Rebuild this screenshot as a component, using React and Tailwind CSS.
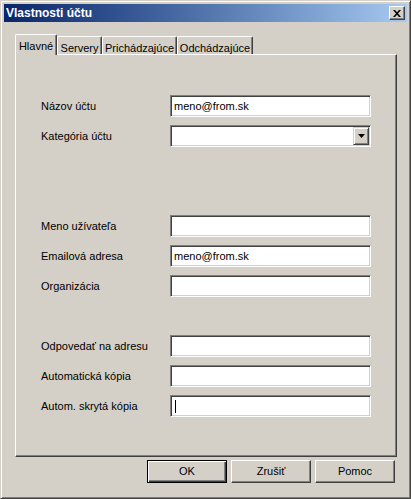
import React from 'react';

// Windows classic "account properties" dialog
const Field = ({ value, caret }) => (
  <div className="w-[201px] h-[22px] bg-white border border-t-[#808080] border-l-[#808080] border-r-white border-b-white shadow-[inset_1px_1px_0_#404040,inset_-1px_-1px_0_#D4D0C8] flex items-center pl-[3px]">
    {value && <span className="leading-none">{value}</span>}
    {caret && <span className="w-px h-[13px] bg-black ml-px" />}
  </div>
);

const Combo = () => (
  <div className="w-[201px] h-[22px] bg-white border border-t-[#808080] border-l-[#808080] border-r-white border-b-white shadow-[inset_1px_1px_0_#404040,inset_-1px_-1px_0_#D4D0C8] flex items-center justify-end p-[1px]">
    <div className="w-[16px] h-[18px] bg-[#D4D0C8] border border-t-[#D4D0C8] border-l-[#D4D0C8] border-r-[#404040] border-b-[#404040] shadow-[inset_1px_1px_0_#fff,inset_-1px_-1px_0_#808080] flex items-center justify-center">
      <svg width="7" height="4" viewBox="0 0 7 4">
        <polygon points="0,0 7,0 3.5,4" fill="#000" />
      </svg>
    </div>
  </div>
);

const Row = ({ label, children }) => (
  <div className="flex items-center">
    <div className="w-[129px]">{label}</div>
    {children}
  </div>
);

const Button = ({ children, isDefault }) => (
  <button
    type="button"
    className={
      isDefault
        ? 'w-[80px] h-[23px] bg-[#D4D0C8] border border-black shadow-[inset_1px_1px_0_#fff,inset_-1px_-1px_0_#404040,inset_-2px_-2px_0_#808080] leading-none'
        : 'w-[80px] h-[23px] bg-[#D4D0C8] border border-t-white border-l-white border-r-[#404040] border-b-[#404040] shadow-[inset_-1px_-1px_0_#808080] leading-none'
    }
  >
    {children}
  </button>
);

const tabs = [
  { name: 'Servery', w: 'w-[45px]' },
  { name: 'Prichádzajúce', w: 'w-[75px]' },
  { name: 'Odchádzajúce', w: 'w-[76px]' },
];

export default function App() {
  return (
    <div className="w-[411px] h-[499px] bg-[#D4D0C8] border border-t-[#D4D0C8] border-l-[#D4D0C8] border-r-[#404040] border-b-[#404040] shadow-[inset_1px_1px_0_#fff,inset_-1px_-1px_0_#808080] p-[3px] flex flex-col text-[11px] text-black font-['Liberation_Sans',Arial,sans-serif]">
      {/* title bar */}
      <div className="h-[18px] flex items-center justify-between bg-linear-to-r from-[#0A246A] to-[#A6CAF0] pl-[2px] pr-[2px]">
        <span className="text-white font-bold text-[12px] leading-none">Vlastnosti účtu</span>
        <div className="w-[16px] h-[14px] bg-[#D4D0C8] border border-t-white border-l-white border-r-[#404040] border-b-[#404040] shadow-[inset_-1px_-1px_0_#808080] flex items-center justify-center">
          <svg width="8" height="7" viewBox="0 0 8 7">
            <path d="M0 0h2l2 2.2L6 0h2L5 3.5 8 7H6L4 4.8 2 7H0l3-3.5z" fill="#000" />
          </svg>
        </div>
      </div>

      {/* tabs */}
      <div className="ml-[11px] mt-[12px] flex items-end h-[20px]">
        <div className="relative z-10 -mb-px w-[42px] h-[21px] bg-[#D4D0C8] border border-b-0 border-t-white border-l-white border-r-[#404040] shadow-[inset_-1px_0_0_#808080] rounded-t-[2px] flex justify-center pt-[3px]">
          Hlavné
        </div>
        {tabs.map((t) => (
          <div
            key={t.name}
            className={`${t.w} h-[18px] border border-b-0 border-t-white border-l-white border-r-[#404040] shadow-[inset_-1px_0_0_#808080] rounded-t-[2px] flex justify-center pt-[3px]`}
          >
            {t.name}
          </div>
        ))}
      </div>

      {/* panel */}
      <div className="ml-[11px] w-[382px] h-[403px] border border-t-white border-l-white border-r-[#404040] border-b-[#404040] shadow-[inset_-1px_-1px_0_#808080] pt-[40px] pl-[25px] flex flex-col gap-[8px]">
        <Row label="Názov účtu"><Field value="meno@from.sk" /></Row>
        <Row label="Kategória účtu"><Combo /></Row>
        <div className="mt-[60px]">
          <Row label="Meno užívateľa"><Field /></Row>
        </div>
        <Row label="Emailová adresa"><Field value="meno@from.sk" /></Row>
        <Row label="Organizácia"><Field /></Row>
        <div className="mt-[30px]">
          <Row label="Odpovedať na adresu"><Field /></Row>
        </div>
        <Row label="Automatická kópia"><Field /></Row>
        <Row label="Autom. skrytá kópia"><Field caret /></Row>
      </div>

      {/* buttons */}
      <div className="ml-[11px] w-[382px] mt-[3px] flex justify-end gap-[4px] pr-[2px]">
        <Button isDefault>OK</Button>
        <Button>Zrušiť</Button>
        <Button>Pomoc</Button>
      </div>
    </div>
  );
}
